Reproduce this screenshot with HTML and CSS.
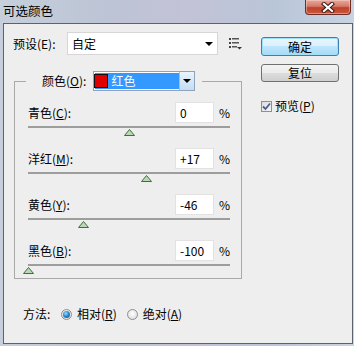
FILE: index.html
```html
<!DOCTYPE html>
<html>
<head>
<meta charset="utf-8">
<title>可选颜色</title>
<link rel="stylesheet" href="styles.css">
</head>
<body>
<div class="window">
  <div class="titlebar">
    <span class="title">可选颜色</span>
    <div class="close">
      <svg width="14" height="11" viewBox="0 0 14 11">
        <path d="M3 2 L11 9 M11 2 L3 9" stroke="#3a1a16" stroke-width="4.2" stroke-linecap="square" fill="none"/>
        <path d="M3 2 L11 9 M11 2 L3 9" stroke="#ffffff" stroke-width="2.2" stroke-linecap="square" fill="none"/>
      </svg>
    </div>
  </div>
  <div class="client">
    <div class="main">
      <div class="preset-row">
        <span class="lbl">预设(E):</span>
        <div class="select preset">
          <span>自定</span>
          <svg width="8" height="4" viewBox="0 0 8 4"><path d="M0 0 H8 L4 4 Z" fill="#000"/></svg>
        </div>
        <svg class="menu-icon" width="13" height="12" viewBox="0 0 13 12">
          <rect x="0" y="0" width="2" height="2" fill="#444"/>
          <rect x="3" y="0" width="7" height="1.5" fill="#555"/>
          <rect x="0" y="4" width="2" height="2" fill="#444"/>
          <rect x="3" y="4" width="7" height="1.5" fill="#555"/>
          <rect x="0" y="8" width="2" height="2" fill="#444"/>
          <rect x="3" y="8" width="5" height="1.5" fill="#555"/>
          <path d="M8 9 H13 L10.5 11.5 Z" fill="#333"/>
        </svg>
      </div>

      <fieldset class="group">
        <legend class="legend">
          <span>颜色(<u>O</u>):</span>
          <div class="color-select">
            <div class="sel">
              <span class="swatch"></span>
              <span class="sel-text">红色</span>
            </div>
            <div class="drop-btn">
              <svg width="8" height="4" viewBox="0 0 8 4"><path d="M0 0 H8 L4 4 Z" fill="#000"/></svg>
            </div>
          </div>
        </legend>

        <div class="srow">
          <div class="stop">
            <span class="slabel">青色(<u>C</u>):</span>
            <span class="num">0</span>
            <span class="pct">%</span>
          </div>
          <div class="track-wrap">
            <div class="track"></div>
            <svg class="thumb" style="left:50%" width="11" height="7" viewBox="0 0 11 7"><path d="M0.5 6.5 L5.5 0.5 L10.5 6.5 Z" fill="#b9d9b4" stroke="#3f6f3c" stroke-width="1"/></svg>
          </div>
        </div>

        <div class="srow">
          <div class="stop">
            <span class="slabel">洋红(<u>M</u>):</span>
            <span class="num">+17</span>
            <span class="pct">%</span>
          </div>
          <div class="track-wrap">
            <div class="track"></div>
            <svg class="thumb" style="left:58.5%" width="11" height="7" viewBox="0 0 11 7"><path d="M0.5 6.5 L5.5 0.5 L10.5 6.5 Z" fill="#b9d9b4" stroke="#3f6f3c" stroke-width="1"/></svg>
          </div>
        </div>

        <div class="srow">
          <div class="stop">
            <span class="slabel">黄色(<u>Y</u>):</span>
            <span class="num">-46</span>
            <span class="pct">%</span>
          </div>
          <div class="track-wrap">
            <div class="track"></div>
            <svg class="thumb" style="left:27%" width="11" height="7" viewBox="0 0 11 7"><path d="M0.5 6.5 L5.5 0.5 L10.5 6.5 Z" fill="#b9d9b4" stroke="#3f6f3c" stroke-width="1"/></svg>
          </div>
        </div>

        <div class="srow">
          <div class="stop">
            <span class="slabel">黑色(<u>B</u>):</span>
            <span class="num">-100</span>
            <span class="pct">%</span>
          </div>
          <div class="track-wrap">
            <div class="track"></div>
            <svg class="thumb" style="left:0%" width="11" height="7" viewBox="0 0 11 7"><path d="M0.5 6.5 L5.5 0.5 L10.5 6.5 Z" fill="#b9d9b4" stroke="#3f6f3c" stroke-width="1"/></svg>
          </div>
        </div>
      </fieldset>

      <div class="method">
        <span class="mlabel">方法:</span>
        <span class="radio on"><span class="dot"></span></span>
        <span class="rtext">相对(<u>R</u>)</span>
        <span class="radio"></span>
        <span class="rtext">绝对(<u>A</u>)</span>
      </div>
    </div>

    <div class="side">
      <div class="btn default">确定</div>
      <div class="btn">复位</div>
      <div class="check-row">
        <span class="checkbox">
          <svg width="9" height="9" viewBox="0 0 9 9"><path d="M1 4.5 L3.5 7 L8 1.5" stroke="#4b5f93" stroke-width="1.8" fill="none"/></svg>
        </span>
        <span class="ctext">预览(<u>P</u>)</span>
      </div>
    </div>
  </div>
</div>
</body>
</html>
```

FILE: styles.css
```css
* {
  box-sizing: border-box;
}

html, body {
  margin: 0;
  padding: 0;
}

body {
  width: 354px;
  height: 346px;
  overflow: hidden;
  font-family: "Noto Sans CJK SC", "Noto Sans", sans-serif;
  font-size: 12px;
  line-height: 16px;
  color: #000;
  background: linear-gradient(90deg, #c6cfdb 0%, #bcc4d5 30%, #c3c2d6 52%, #b9c6d8 78%, #c8d4e1 100%);
}

u {
  text-decoration: underline;
  text-underline-offset: 1px;
}

.window {
  display: flex;
  flex-direction: column;
  height: 346px;
}

.titlebar {
  height: 23px;
  display: flex;
  justify-content: space-between;
  align-items: flex-start;
  padding: 0 3px 0 3px;
}

.title {
  font-size: 12.5px;
  line-height: 15px;
  margin-top: 3px;
  font-weight: 400;
}

.close {
  width: 46px;
  height: 15px;
  border: 1px solid #6e2c24;
  border-top: none;
  border-radius: 0 0 4px 4px;
  background: linear-gradient(180deg, #e7a89b 0%, #d47a69 45%, #c0402c 55%, #c85a3e 100%);
  box-shadow: inset 0 0 0 1px rgba(255, 220, 210, 0.45);
  display: flex;
  align-items: center;
  justify-content: center;
}

.client {
  margin: 0 1px 2px 3px;
  height: 321px;
  border: 1px solid #5a636e;
  background: #eeeeee;
  display: flex;
}

.main {
  width: 253px;
  padding: 8px 0 0 9px;
  display: flex;
  flex-direction: column;
}

.preset-row {
  display: flex;
  align-items: center;
  height: 23px;
}

.lbl {
  width: 54px;
  flex-shrink: 0;
  white-space: nowrap;
}

.select {
  display: flex;
  align-items: center;
  justify-content: space-between;
  background: #fff;
  border: 1px solid #d6d6d6;
}

.preset {
  width: 151px;
  height: 23px;
  padding: 0 4px 0 4px;
}

.menu-icon {
  margin-left: 11px;
  margin-top: 1px;
}

.group {
  margin: 16px 0 0 1px;
  width: 228px;
  min-width: 0;
  padding: 0 11px 4px 13px;
  border: 1px solid #a9a9a9;
}

.legend {
  margin-left: -2px;
  padding: 0 7px 0 16px;
  display: flex;
  align-items: center;
  height: 20px;
  white-space: nowrap;
}

.color-select {
  margin-left: 7px;
  width: 102px;
  height: 20px;
  border: 1px solid #8fa3bd;
  display: flex;
  background: #fff;
}

.sel {
  flex: 1;
  display: flex;
  align-items: center;
  background: #3399ff;
  margin: 1px 0 1px 1px;
}

.swatch {
  width: 14px;
  height: 14px;
  background: #e00000;
  border: 1px solid #111;
  margin-left: -1px;
}

.sel-text {
  color: #fff;
  margin-left: 3px;
}

.drop-btn {
  width: 15px;
  display: flex;
  align-items: center;
  justify-content: center;
  border-left: 1px solid #a7bfd8;
  background: linear-gradient(180deg, #eaf4fc 0%, #d6e8f7 50%, #c3ddf3 100%);
}

.srow {
  margin-top: 12px;
}

.srow:first-of-type {
  margin-top: 11px;
}

.stop {
  display: flex;
  align-items: center;
  height: 21px;
  white-space: nowrap;
}

.slabel {
  flex: 1;
}

.num {
  width: 39px;
  height: 21px;
  background: #fff;
  border: 1px solid #e2e2e2;
  padding-left: 4px;
  line-height: 19px;
}

.pct {
  width: 11px;
  margin-left: 5px;
  text-align: right;
}

.track-wrap {
  position: relative;
  margin-top: 3px;
  height: 10px;
}

.track {
  height: 2px;
  background: #9d9d9d;
}

.thumb {
  position: absolute;
  top: 3px;
  transform: translateX(-5px);
  display: block;
}

.method {
  display: flex;
  align-items: center;
  height: 16px;
  margin-top: 27px;
  padding-left: 10px;
  white-space: nowrap;
}

.mlabel {
  width: 28px;
  flex-shrink: 0;
}

.radio {
  flex-shrink: 0;
  width: 11px;
  height: 11px;
  border-radius: 50%;
  border: 1px solid #8e8f8f;
  background: radial-gradient(circle at 50% 40%, #ffffff 0%, #e6e6e6 60%, #d4d4d4 100%);
  display: flex;
  align-items: center;
  justify-content: center;
  margin-left: 10px;
}

.radio .dot {
  width: 7px;
  height: 7px;
  border-radius: 50%;
  background: radial-gradient(circle at 40% 35%, #9fdcff 0%, #2d8bcf 45%, #124e7f 100%);
}

.rtext {
  margin-left: 5px;
}

.side {
  width: 78px;
  margin-left: 4px;
  padding-top: 13px;
  display: flex;
  flex-direction: column;
}

.btn {
  height: 18px;
  border: 1px solid #707070;
  border-radius: 3px;
  background: linear-gradient(180deg, #f3f3f3 0%, #ebebeb 50%, #dddddd 50%, #cfcfcf 100%);
  text-align: center;
  line-height: 16px;
  margin-bottom: 9px;
}

.btn.default {
  height: 19px;
  border-color: #3c7fb1;
  background: linear-gradient(180deg, #eaf6fd 0%, #d9f0fc 50%, #bee6fd 50%, #a7d9f5 100%);
  box-shadow: inset 0 0 0 1px #9ee0f8;
  line-height: 17px;
  margin-bottom: 8px;
}

.check-row {
  display: flex;
  align-items: center;
  margin-top: 7px;
  height: 16px;
  white-space: nowrap;
}

.checkbox {
  width: 11px;
  height: 11px;
  border: 1px solid #8e8f8f;
  background: linear-gradient(135deg, #dcdcdc 0%, #f6f6f6 100%);
  display: flex;
  align-items: center;
  justify-content: center;
}

.ctext {
  margin-left: 3px;
}
```
